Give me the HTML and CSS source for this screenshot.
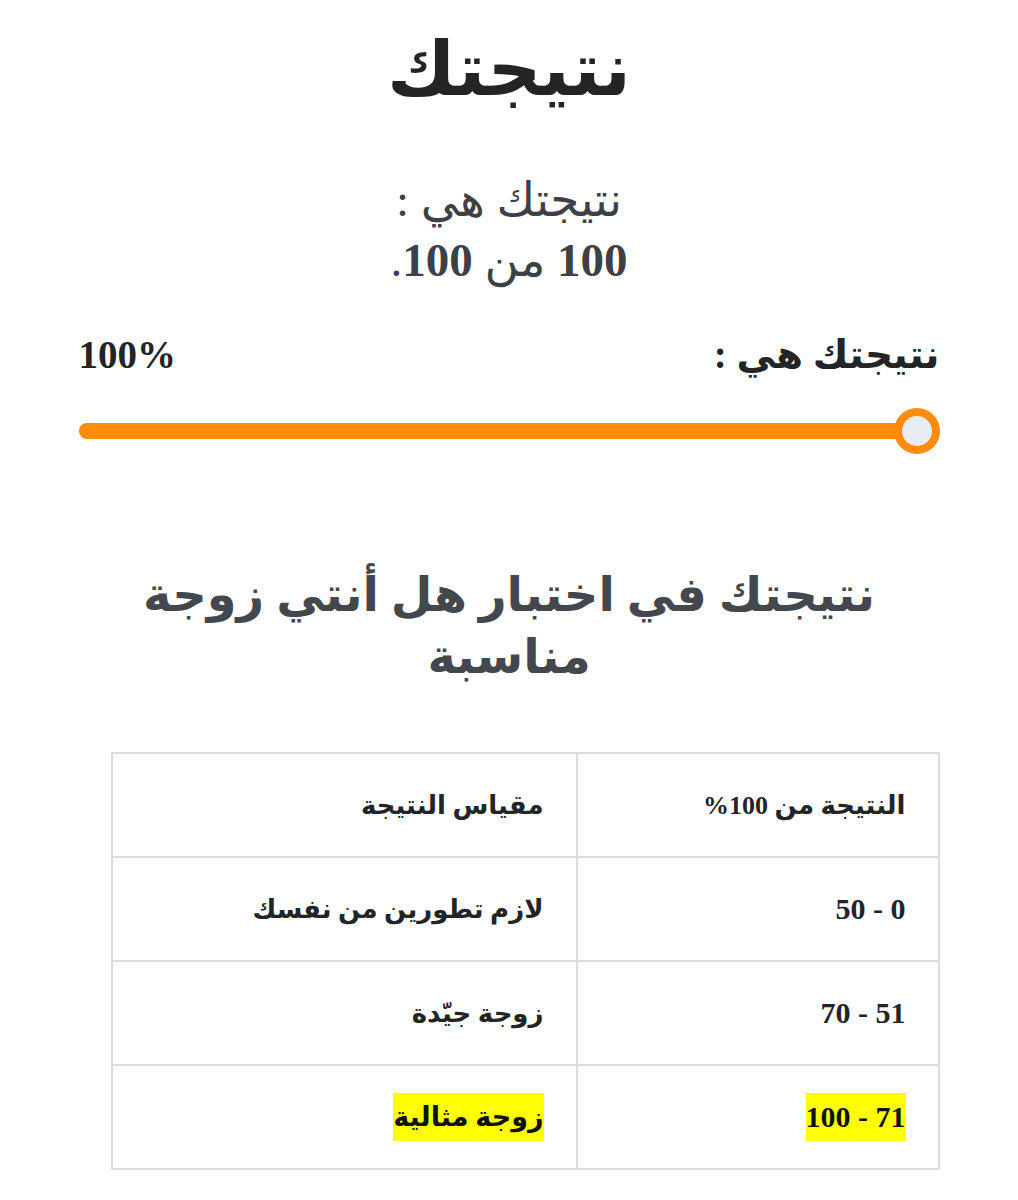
FILE: index.html
```html
<!DOCTYPE html>
<html lang="ar" dir="rtl">
<head>
<meta charset="utf-8">
<title>نتيجتك</title>
<link rel="stylesheet" href="styles.css">
</head>
<body>
<main class="page">
  <h1 class="title">نتيجتك</h1>

  <p class="summary">
    <span class="summary-line">نتيجتك هي :</span>
    <span class="summary-line"><b class="num">100</b> من <b class="num">100</b>.</span>
  </p>

  <section class="meter">
    <div class="meter-head">
      <span class="meter-label">نتيجتك هي :</span>
      <span class="meter-value" dir="ltr">100%</span>
    </div>
    <div class="meter-track">
      <div class="meter-fill" style="width: 100%"></div>
      <span class="meter-knob"></span>
    </div>
  </section>

  <h2 class="result-heading">نتيجتك في اختبار هل أنتي زوجة مناسبة</h2>

  <div class="table-wrap">
    <table class="scale">
      <colgroup>
        <col class="col-range">
        <col class="col-label">
      </colgroup>
      <tbody>
        <tr>
          <td><strong>النتيجة من 100%</strong></td>
          <td><strong>مقياس النتيجة</strong></td>
        </tr>
        <tr>
          <td><strong class="range">0 - 50</strong></td>
          <td><strong>لازم تطورين من نفسك</strong></td>
        </tr>
        <tr>
          <td><strong class="range">51 - 70</strong></td>
          <td><strong>زوجة جيّدة</strong></td>
        </tr>
        <tr>
          <td><mark class="hl hl-range">71 - 100</mark></td>
          <td><mark class="hl">زوجة مثالية</mark></td>
        </tr>
      </tbody>
    </table>
  </div>
</main>
</body>
</html>
```

FILE: styles.css
```css
* {
  box-sizing: border-box;
}

html, body {
  margin: 0;
  padding: 0;
  background: #ffffff;
}

body {
  font-family: "Liberation Serif", "DejaVu Sans", sans-serif;
  color: #222426;
}

.page {
  width: 861px;
  margin: 0 auto;
  padding-top: 22px;
}

.title {
  margin: 0;
  text-align: center;
  font-size: 75px;
  line-height: 96px;
  font-weight: 700;
  color: #222426;
}

.summary {
  margin: 52px 0 0;
  text-align: center;
  font-size: 47px;
  line-height: 60px;
  font-weight: 400;
  color: #3d4047;
}

.summary-line {
  display: block;
}

.summary .num {
  font-weight: 700;
}

.meter {
  margin-top: 41px;
}

.meter-head {
  display: flex;
  justify-content: space-between;
  align-items: center;
  font-size: 39px;
  line-height: 48px;
  font-weight: 700;
  color: #222426;
}

.meter-track {
  position: relative;
  margin-top: 44px;
  height: 16px;
  border-radius: 8px;
  background: #eceef2;
}

.meter-fill {
  height: 100%;
  border-radius: 8px;
  background: #ff8a0c;
}

.meter-knob {
  position: absolute;
  right: 0;
  top: 50%;
  width: 46px;
  height: 46px;
  margin-top: -23px;
  border-radius: 50%;
  border: 8px solid #ff8a0c;
  background: #e9ecf2;
}

.result-heading {
  margin: 125px 0 0;
  padding: 0 50px;
  text-align: center;
  font-size: 48px;
  line-height: 62px;
  font-weight: 700;
  color: #43474e;
}

.table-wrap {
  margin-top: 64px;
  display: flex;
}

.scale {
  width: 827px;
  table-layout: fixed;
  border-collapse: collapse;
  font-size: 26px;
  color: #222426;
}

.col-range {
  width: 362px;
}

.col-label {
  width: 465px;
}

.scale td {
  height: 104px;
  padding: 0 32px;
  text-align: right;
  vertical-align: middle;
  border: 2px solid #dcdde1;
}

.scale strong {
  font-weight: 700;
}

.scale .range {
  font-size: 30px;
}

.hl {
  display: inline-block;
  background: #ffff00;
  color: #111111;
  font-weight: 700;
  font-size: 27px;
  line-height: 48px;
}

.hl-range {
  font-size: 30px;
}
```
